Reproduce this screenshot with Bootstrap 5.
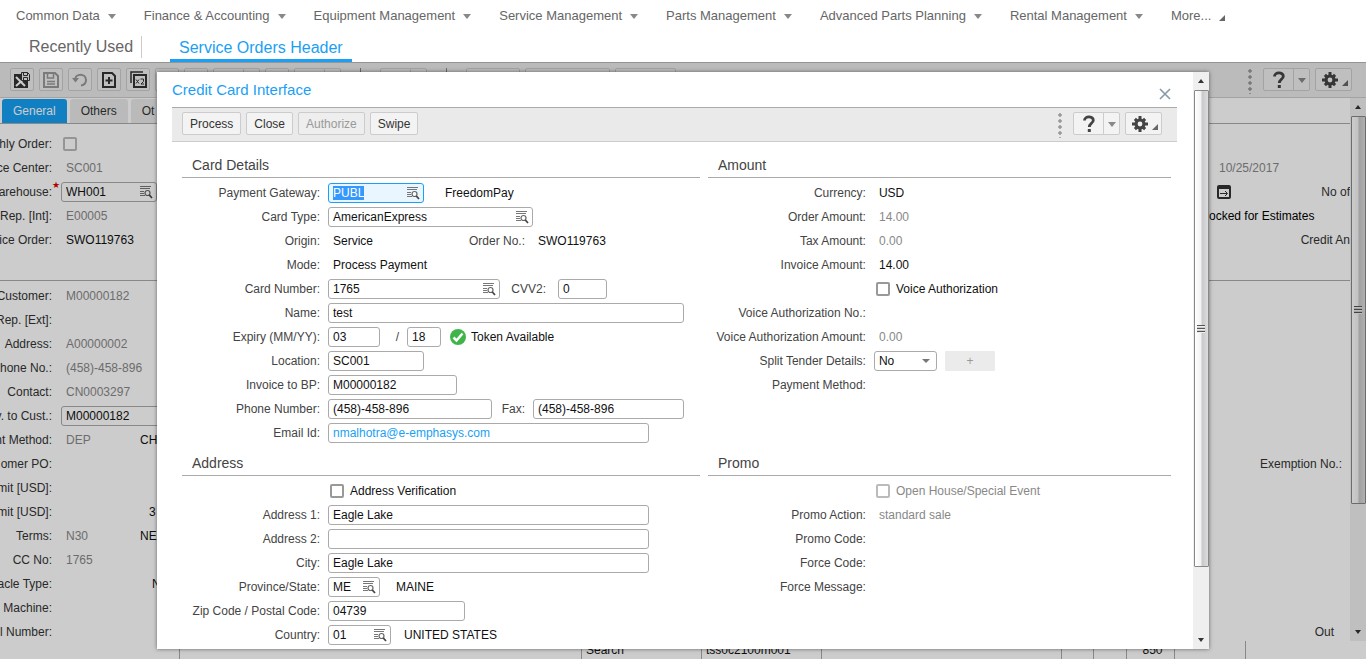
<!DOCTYPE html>
<html lang="en">
<head>
<meta charset="utf-8">
<meta name="viewport" content="width=device-width, initial-scale=1">
<title>Service Orders Header</title>
<link href="https://cdn.jsdelivr.net/npm/bootstrap@5.3.0/dist/css/bootstrap.min.css" rel="stylesheet">
<style>
:root{--ui-blue:#1a9ff4;--ui-line:#aaa;--ui-soft:#888;--ui-label:#444}
body{font-family:"Liberation Sans",Arial,sans-serif;font-size:12px;line-height:14px;color:#111;background:#fff}
a{text-decoration:none}
button{font-family:inherit}
.menu{height:32px;padding-left:16px;gap:28px;font-size:13px}
.menu a{color:#666;gap:8px}
.caret{width:0;height:0;border:4px solid transparent;border-top:5px solid #888;border-bottom:0}
.corner{width:0;height:0;border-left:6px solid transparent;border-bottom:6px solid #666}
.pages{height:30px;padding-left:29px;font-size:16px;line-height:18px}
.pages .recent{color:#666;padding-right:8px;border-right:1px solid #ccc;margin-right:28px;height:22px;line-height:22px}
.pages .current{color:var(--ui-blue);border-bottom:3px solid var(--ui-blue);padding:7px 9px 0}
.work{min-height:0}
.tools{background:#eaeaea;border-top:1px solid #bbb;border-bottom:1px solid #ccc}
.bgtools{height:36px;padding:5px 14px 0 10px;gap:5px}
.tbtn{height:23px;padding:0 7px;border:1px solid #ccc;border-radius:2px;background:#f3f3f3;color:#333;line-height:14px;white-space:nowrap}
.tbtn:disabled{color:#999;background:#eee}
.tbtn.sq{width:24px;padding:0}
.bgtools .tbtn{border-color:#ccc;background:#efefef}
.tbtn svg{display:block;margin:auto}
.split .tbtn:first-child{width:31px;padding:0;border-radius:2px 0 0 2px}
.split .tbtn:last-child{width:17px;padding:0;border-radius:0 2px 2px 0;margin-left:-1px}
.split .caret{margin:2px auto 0}
.tbtn.gear{width:37px;padding:0 3px 0 6px}
.vsep{width:1px;height:22px;background:#888;margin:0 14px}
.dots{width:4px;height:26px;background:radial-gradient(circle,#999 1px,#bbb 2px,transparent 2px) 0 0/4px 6px;margin-right:6px}
.w54{width:54px}.w85{width:85px}.w61{width:61px}
.tabs{height:26px;padding:1px 0 0 2px;gap:3px;border-bottom:1px solid var(--ui-line)}
.tabs button{border:0;border-radius:3px 3px 0 0;background:#e9e9e9;color:#333;padding:0 11px;height:24px}
.tabs button.on{background:#14a0f4;color:#fff}
.sheet{background:#fff}
.blk{padding:8px 0 28px}
.blk + .blk{border-top:1px solid var(--ui-line);padding:3px 0 0}
.r{height:24px;display:flex;align-items:center;white-space:nowrap}
.lb{width:52px;display:flex;justify-content:flex-end;flex:none;color:#333;margin-right:9px;position:relative}
.star{position:absolute;left:100%;top:-7px;color:#d00;font-size:9px}
.v{padding-left:5px}
.side{width:141px;flex:none;display:flex;margin-left:auto;overflow:hidden;color:#333}
.soft{color:var(--ui-soft)}
.v79{width:79px}
.sb{width:16px;flex:none;background:#efefef;display:flex;flex-direction:column;align-items:center}
.sb .up,.sb .dn{width:0;height:0;border:3px solid transparent}
.sb .up{border-bottom:4px solid #333;border-top:0;margin:7px 0}
.sb .dn{border-top:4px solid #333;border-bottom:0;margin:auto 0 7px}
.thumb{width:15px;border:1px solid #888;border-radius:1px;background:linear-gradient(90deg,#fff,#f2f2f4 45%,#c9c9cd 55%,#ddd);display:flex;align-items:center;justify-content:center}
.thumb i{width:8px;height:8px;background:repeating-linear-gradient(#555 0 1px,#eee 1px 2px,#ccc 2px 3px)}
.foot{height:18px;background:#fff;overflow:hidden}
.foot span{border-right:1px solid #aaa;line-height:18px;padding-left:4px;flex:none;white-space:nowrap}
.shade{position:absolute;inset:0;background:rgba(0,0,0,.2);padding:10px 157px}
.dlg{background:#fff;box-shadow:0 0 4px rgba(0,0,0,.5)}
.dlg h1{font-size:15px;line-height:18px;color:var(--ui-blue);font-weight:400;margin:0}
.top{margin:0 16px 0 15px}
.head{height:35px;padding:0 6px 0 0}
.mtools{height:35px;padding:4px 15px 0 10px;gap:5px;border-color:#aaa #aaa #ccc}
.forms{padding:5px 22px 0 25px;display:grid;grid-template-columns:528fr 472fr;column-gap:8px}
.forms h2{height:31px;border-bottom:1px solid var(--ui-line);font-size:14px;line-height:16px;font-weight:400;color:#444;padding:10px 0 0 10px;margin:0 0 3px}
.forms .lab{flex:none;width:146px;padding-right:8px;text-align:right;color:var(--ui-label)}
.forms .b .lab{width:166px}
.forms .r .lab.l69{width:69px}.forms .r .lab.l41{width:41px}.forms .r .lab.l58{width:58px;padding-right:12px}.forms .r .lab.l27{width:27px}
.inp{height:20px;border:1px solid var(--ui-line);border-radius:3px;background:#fff;padding:0 4px;color:#111;font-size:12px;line-height:14px;min-width:0;outline:0}
.inp:focus{border-color:var(--ui-blue);background:#e9f6ff}
.inp::selection{background:#39f;color:#fff}
.mail{color:var(--ui-blue)}
.lk{position:relative;display:flex;flex:none}
.lk .inp{width:100%}
.lk button{position:absolute;right:4px;top:4px;border:0;background:none;padding:0;line-height:0}
.i34{width:34px}.i49{width:49px}.i52{width:52px}.i63{width:63px}.i96{width:96px}.i129{width:129px}.i136{width:136px}.i137{width:137px}.i151{width:151px}.i164{width:164px}.i172{width:172px}.i205{width:205px}.i321{width:321px}.i356{width:356px}
.ck{appearance:none;width:14px;height:14px;border:2px solid #999;border-radius:2px;margin:0 6px 0 2px;background:#fff}
.ck:disabled{border-color:#bbb}
.sel{width:63px;appearance:none;background:#fff url("data:image/svg+xml,%3Csvg xmlns='http://www.w3.org/2000/svg' width='8' height='5'%3E%3Cpath d='M0 0h8L4 4z' fill='%23777'/%3E%3C/svg%3E") no-repeat right 6px center}
.plus{width:50px;height:20px;border:0;background:#ebebeb;color:#999;margin-left:8px;border-radius:1px;padding:0}
</style>
</head>
<body class="vh-100 d-flex flex-column overflow-hidden">
<svg width="0" height="0" class="position-absolute" aria-hidden="true">
<symbol id="look" viewBox="0 0 13 13"><path d="M0 .5h11M0 2.500h10M0 5.500h4M0 7.500h4M0 9.500h5" stroke="#777" fill="none"/><circle cx="7.500" cy="7" r="2.500" fill="#fff" stroke="#666" stroke-width="1.200"/><path d="M9.300 9l2.700 3" stroke="#444" stroke-width="1.800"/></symbol>
<symbol id="gear" viewBox="0 0 16 16"><g fill="#444"><circle cx="8" cy="8" r="5.500"/><path d="M6.500 0h3v16h-3zM0 6.500h16v3H0z"/><path d="M6.500 .8h3v14.400h-3zM.8 6.500h14.400v3H.8z" transform="rotate(45 8 8)"/></g><circle cx="8" cy="8" r="2.400" fill="#f2f2f2"/></symbol>
<symbol id="help" viewBox="0 0 14 18"><path d="M2.500 5.500C2.500 .8 11.300 .8 11.300 5.200c0 3-4 3.300-4 6.800" fill="none" stroke="#444" stroke-width="2.800"/><path d="M5.800 14h3v3h-3z" fill="#444"/></symbol>
</svg>

<header class="flex-shrink-0">
<nav class="menu d-flex align-items-center text-nowrap">
<a href="#" class="d-flex align-items-center">Common Data <i class="caret"></i></a>
<a href="#" class="d-flex align-items-center">Finance &amp; Accounting <i class="caret"></i></a>
<a href="#" class="d-flex align-items-center">Equipment Management <i class="caret"></i></a>
<a href="#" class="d-flex align-items-center">Service Management <i class="caret"></i></a>
<a href="#" class="d-flex align-items-center">Parts Management <i class="caret"></i></a>
<a href="#" class="d-flex align-items-center">Advanced Parts Planning <i class="caret"></i></a>
<a href="#" class="d-flex align-items-center">Rental Management <i class="caret"></i></a>
<a href="#" class="d-flex align-items-center">More... <i class="corner mt-1"></i></a>
</nav>
<nav class="pages d-flex text-nowrap">
<a href="#" class="recent align-self-center">Recently Used</a>
<a href="#" class="current">Service Orders Header</a>
</nav>
</header>

<main class="work flex-grow-1 position-relative d-flex flex-column">
<div class="tools bgtools d-flex flex-shrink-0">
<button class="tbtn sq" aria-label="Save and close"><svg width="18" height="18" viewBox="0 0 18 18"><path d="M1 3h8v4l3 3h3v7H1z" fill="#333"/><path d="M3 6l9 9M12 7l-9 8" stroke="#fff" stroke-width="2"/><path d="M8.500 1.500h6l2 2v6h-8z" fill="#eee" stroke="#333"/><path d="M10.500 1.500v3h4v-3M10.500 9.500v-3h4v3" fill="none" stroke="#333"/></svg></button>
<button class="tbtn sq" aria-label="Save"><svg width="16" height="16" viewBox="0 0 16 16"><path d="M1 1h11l3 3v11H1z" fill="none" stroke="#999" stroke-width="2"/><path d="M4.500 1v5h6V1M4 9.500h8M4 12h8" fill="none" stroke="#999" stroke-width="1.500"/></svg></button>
<button class="tbtn sq" aria-label="Undo"><svg width="16" height="16" viewBox="0 0 16 16"><path d="M3 8c0-7 11-7 11 0 0 3-2 5-5 5.500" fill="none" stroke="#999" stroke-width="2"/><path d="M0 6h7L3.500 10.500z" fill="#999"/></svg></button>
<button class="tbtn sq" aria-label="New"><svg width="16" height="16" viewBox="0 0 16 16"><path d="M2 1h9l3 3v11H2z" fill="none" stroke="#333" stroke-width="2"/><path d="M8 5v7M4.500 8.500h7" stroke="#333" stroke-width="2"/></svg></button>
<button class="tbtn sq" aria-label="Duplicate"><svg width="17" height="17" viewBox="0 0 17 17"><path d="M1 12V1h12" fill="none" stroke="#333" stroke-width="1.500"/><path d="M4 4h12v12H4z" fill="none" stroke="#333" stroke-width="2"/><path d="M6 8.500l3 4M9 8.500l-3 4M10.500 8h3v2.500l-2.500 2.500h3" fill="none" stroke="#333"/></svg></button>
<button class="tbtn sq" aria-label="Delete"></button>
<button class="tbtn sq" aria-label="First"></button>
<span class="split d-flex"><button class="tbtn" aria-label="Previous"></button><button class="tbtn" aria-label="Previous options"></button></span>
<button class="tbtn sq" aria-label="Find"></button>
<span class="split d-flex"><button class="tbtn" aria-label="Next"></button><button class="tbtn" aria-label="Next options"></button></span>
<span class="vsep"></span>
<span class="split d-flex"><button class="tbtn" aria-label="Copy"></button><button class="tbtn" aria-label="Copy options"></button></span>
<span class="vsep"></span>
<button class="tbtn w54" aria-label="Print"></button><button class="tbtn w85" aria-label="Release"></button><button class="tbtn w61" aria-label="Invoice"></button>
<span class="dots ms-auto"></span>
<span class="split d-flex"><button class="tbtn" aria-label="Help"><svg width="14" height="18"><use href="#help"/></svg></button><button class="tbtn" aria-label="Help options"><i class="caret d-block"></i></button></span>
<button class="tbtn gear d-flex align-items-center" aria-label="Settings"><svg class="m-0" width="16" height="16"><use href="#gear"/></svg><i class="corner align-self-end mb-1 ms-auto"></i></button>
</div>
<div class="sheet flex-grow-1 d-flex overflow-hidden">
<div class="flex-grow-1 overflow-hidden">
<div class="tabs d-flex"><button class="on">General</button><button>Others</button><button>Ot</button></div>
<div class="blk">
<div class="r"><label class="lb" for="mo">hly Order:</label><input id="mo" class="ck" type="checkbox" disabled></div>
<div class="r"><span class="lb">ce Center:</span><span class="v soft">SC001</span><span class="side v soft"><span class="v">10/25/2017</span></span></div>
<div class="r"><label class="lb" for="wh">arehouse:<span class="star" aria-hidden="true">★</span></label><span class="lk i96"><input id="wh" class="inp" value="WH001"><button aria-label="Look up warehouse"><svg width="13" height="13"><use href="#look"/></svg></button></span><span class="side align-items-center ps-2"><svg width="15" height="14" viewBox="0 0 15 14"><rect x="1" y="1" width="12" height="12" rx="1" fill="none" stroke="#333" stroke-width="2"/><path d="M1 1h12v3H1z" fill="#333"/><path d="M3 8.500h7M8 6l2.500 2.500L8 11" fill="none" stroke="#333"/></svg><span class="ms-auto">No of</span></span></div>
<div class="r"><span class="lb">Rep. [Int]:</span><span class="v soft">E00005</span><span class="side text-black">ocked for Estimates</span></div>
<div class="r"><span class="lb">ice Order:</span><span class="v">SWO119763</span><span class="side justify-content-end">Credit An</span></div>
</div>
<div class="blk">
<div class="r"><span class="lb">Customer:</span><span class="v soft">M00000182</span></div>
<div class="r"><span class="lb">Rep. [Ext]:</span></div>
<div class="r"><span class="lb">Address:</span><span class="v soft">A00000002</span></div>
<div class="r"><span class="lb">hone No.:</span><span class="v soft">(458)-458-896</span></div>
<div class="r"><span class="lb">Contact:</span><span class="v soft">CN0003297</span></div>
<div class="r"><label class="lb" for="ic">v. to Cust.:</label><input id="ic" class="inp i129" value="M00000182"></div>
<div class="r"><span class="lb">nt Method:</span><span class="v v79 soft">DEP</span><span>CH</span></div>
<div class="r"><span class="lb">omer PO:</span><span class="side justify-content-end pe-2">Exemption No.:</span></div>
<div class="r"><span class="lb">mit [USD]:</span></div>
<div class="r"><span class="lb">mit [USD]:</span><span class="v79"></span><span class="ps-2">&#8202;3</span></div>
<div class="r"><span class="lb">Terms:</span><span class="v v79 soft">N30</span><span>NE</span></div>
<div class="r"><span class="lb">CC No:</span><span class="v soft">1765</span></div>
<div class="r"><span class="lb">acle Type:</span><span class="v79"></span><span class="ps-2 ms-1">N</span></div>
<div class="r"><span class="lb">Machine:</span></div>
<div class="r"><span class="lb">l Number:</span><span class="side justify-content-end pe-3">Out</span></div>
</div>
</div>
<div class="sb"><i class="up"></i><div class="thumb flex-shrink-0" style="height:71.5%"><i></i></div><i class="dn"></i></div>
</div>
<div class="foot d-flex flex-shrink-0">
<span style="width:180px"></span><span style="width:402px"></span><span style="width:120px">Search</span><span style="width:120px">tss0c2100m001</span><span style="width:240px"></span><span style="width:32px"></span><span style="width:33px"></span><span style="width:48px" class="text-center">850</span><span style="width:71px"></span>
</div>

<div class="shade">
<div class="dlg h-100 d-flex overflow-hidden" role="dialog" aria-labelledby="dt">
<div class="flex-grow-1 overflow-hidden">
<div class="top">
<div class="head d-flex align-items-center justify-content-between"><h1 id="dt">Credit Card Interface</h1><button class="border-0 bg-transparent p-0 mt-2" aria-label="Close dialog"><svg class="d-block" width="12" height="12" viewBox="0 0 12 12"><path d="M1 1l10 10M11 1L1 11" stroke="#8a9ba8" stroke-width="1.700"/></svg></button></div>
<div class="tools mtools d-flex">
<button class="tbtn">Process</button><button class="tbtn">Close</button><button class="tbtn" disabled>Authorize</button><button class="tbtn">Swipe</button>
<span class="dots ms-auto"></span>
<span class="split d-flex"><button class="tbtn" aria-label="Help"><svg width="14" height="18"><use href="#help"/></svg></button><button class="tbtn" aria-label="Help options"><i class="caret d-block"></i></button></span>
<button class="tbtn gear d-flex align-items-center" aria-label="Settings"><svg class="m-0" width="16" height="16"><use href="#gear"/></svg><i class="corner align-self-end mb-1 ms-auto"></i></button>
</div>
</div>
<div class="forms">
<section>
<h2>Card Details</h2>
<div class="r"><label class="lab" for="pg">Payment Gateway:</label><span class="lk i96"><input id="pg" class="inp" value="PUBL"><button aria-label="Look up gateway"><svg width="13" height="13"><use href="#look"/></svg></button></span><span class="ps-3"><span class="v">FreedomPay</span></span></div>
<div class="r"><label class="lab" for="ct">Card Type:</label><span class="lk i205"><input id="ct" class="inp" value="AmericanExpress"><button aria-label="Look up card type"><svg width="13" height="13"><use href="#look"/></svg></button></span></div>
<div class="r"><span class="lab">Origin:</span><span class="v i136">Service</span><span class="lab l69">Order No.:</span><span class="v">SWO119763</span></div>
<div class="r"><span class="lab">Mode:</span><span class="v">Process Payment</span></div>
<div class="r"><label class="lab" for="cn">Card Number:</label><span class="lk i172"><input id="cn" class="inp" value="1765"><button aria-label="Look up card"><svg width="13" height="13"><use href="#look"/></svg></button></span><label class="lab l58" for="cv">CVV2:</label><input id="cv" class="inp i49" value="0"></div>
<div class="r"><label class="lab" for="nm">Name:</label><input id="nm" class="inp i356" value="test"></div>
<div class="r"><label class="lab" for="em">Expiry (MM/YY):</label><input id="em" class="inp i52" value="03"><label class="lab l27" for="ey">/</label><input id="ey" class="inp i34" value="18"><svg class="ms-2 me-1" width="18" height="18" viewBox="0 0 18 18"><circle cx="9" cy="9" r="8" fill="#3fb549"/><path d="M4.500 9.500l3 3 6-7" fill="none" stroke="#fff" stroke-width="2.500"/></svg><span>Token Available</span></div>
<div class="r"><label class="lab" for="lo">Location:</label><input id="lo" class="inp i96" value="SC001"></div>
<div class="r"><label class="lab" for="bp">Invoice to BP:</label><input id="bp" class="inp i129" value="M00000182"></div>
<div class="r"><label class="lab" for="ph">Phone Number:</label><input id="ph" class="inp i164" value="(458)-458-896"><label class="lab l41" for="fx">Fax:</label><input id="fx" class="inp i151" value="(458)-458-896"></div>
<div class="r"><label class="lab" for="ei">Email Id:</label><input id="ei" class="inp i321 mail" value="nmalhotra@e-emphasys.com"></div>
</section>
<section class="b">
<h2>Amount</h2>
<div class="r"><span class="lab">Currency:</span><span class="v">USD</span></div>
<div class="r"><span class="lab">Order Amount:</span><span class="v soft">14.00</span></div>
<div class="r"><span class="lab">Tax Amount:</span><span class="v soft">0.00</span></div>
<div class="r"><span class="lab">Invoice Amount:</span><span class="v">14.00</span></div>
<div class="r"><span class="lab"></span><input id="va" class="ck" type="checkbox"><label for="va">Voice Authorization</label></div>
<div class="r"><span class="lab">Voice Authorization No.:</span></div>
<div class="r"><span class="lab">Voice Authorization Amount:</span><span class="v soft">0.00</span></div>
<div class="r"><label class="lab" for="st">Split Tender Details:</label><select id="st" class="inp sel"><option>No</option></select><button class="plus">+</button></div>
<div class="r"><span class="lab">Payment Method:</span></div>
</section>
<section>
<h2>Address</h2>
<div class="r"><span class="lab"></span><input id="av" class="ck" type="checkbox"><label for="av">Address Verification</label></div>
<div class="r"><label class="lab" for="a1">Address 1:</label><input id="a1" class="inp i321" value="Eagle Lake"></div>
<div class="r"><label class="lab" for="a2">Address 2:</label><input id="a2" class="inp i321"></div>
<div class="r"><label class="lab" for="ci">City:</label><input id="ci" class="inp i321" value="Eagle Lake"></div>
<div class="r"><label class="lab" for="ps">Province/State:</label><span class="lk i52"><input id="ps" class="inp" value="ME"><button aria-label="Look up state"><svg width="13" height="13"><use href="#look"/></svg></button></span><span class="ps-3">MAINE</span></div>
<div class="r"><label class="lab" for="zp">Zip Code / Postal Code:</label><input id="zp" class="inp i137" value="04739"></div>
<div class="r"><label class="lab" for="co">Country:</label><span class="lk i63"><input id="co" class="inp" value="01"><button aria-label="Look up country"><svg width="13" height="13"><use href="#look"/></svg></button></span><span class="ps-2"><span class="v">UNITED STATES</span></span></div>
</section>
<section class="b">
<h2>Promo</h2>
<div class="r"><span class="lab"></span><input id="oh" class="ck" type="checkbox" disabled><label class="soft" for="oh">Open House/Special Event</label></div>
<div class="r"><span class="lab">Promo Action:</span><span class="v soft">standard sale</span></div>
<div class="r"><span class="lab">Promo Code:</span></div>
<div class="r"><span class="lab">Force Code:</span></div>
<div class="r"><span class="lab">Force Message:</span></div>
</section>
</div>
</div>
<div class="sb"><i class="up"></i><div class="thumb flex-shrink-0" style="height:82.7%"><i></i></div><i class="dn"></i></div>
</div>
</div>
</main>
<script src="https://cdn.jsdelivr.net/npm/bootstrap@5.3.0/dist/js/bootstrap.bundle.min.js"></script>
<script>
const gateway = document.getElementById('pg');
gateway.focus();
gateway.select();
</script>
</body>
</html>
